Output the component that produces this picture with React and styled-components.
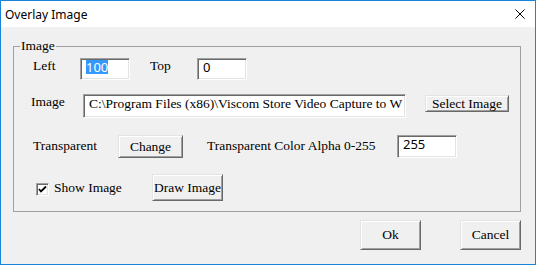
import React from 'react';
import styled, { createGlobalStyle } from 'styled-components';

const serif = `"Liberation Serif", "Times New Roman", serif`;
const sans = `"Noto Sans", "Open Sans", Arial, sans-serif`;

const GlobalStyle = createGlobalStyle`
  html, body {
    margin: 0;
    background: #fff;
  }
  * {
    box-sizing: border-box;
  }
`;

const App = () => {
  return (
    <>
      <GlobalStyle />
      <Window>
        <TitleBar>
          <Title>Overlay Image</Title>
          <svg width="10" height="10" viewBox="0 0 10 10">
            <path d="M0.5 0.5 L9.5 9.5 M9.5 0.5 L0.5 9.5" stroke="#000" strokeWidth="1" />
          </svg>
        </TitleBar>
        <Body>
          <GroupBox>
            <Legend>Image</Legend>
            <Row $h={22} $mt={0}>
              <Label $ml={19} $w={47}>Left</Label>
              <TextBox $w={50} $h={22}>
                <Selected>100</Selected>
              </TextBox>
              <Label $ml={20} $w={47}>Top</Label>
              <TextBox $w={50} $h={22}>0</TextBox>
            </Row>
            <Row $h={24} $mt={14}>
              <Label $ml={17} $w={52}>Image</Label>
              <TextBox $w={323} $h={24} $serif>
                C:\Program Files (x86)\Viscom Store Video Capture to W
              </TextBox>
              <Button $ml={19} $mt={1} $w={84} $h={17}>Select Image</Button>
            </Row>
            <Row $h={23} $mt={17}>
              <Label $ml={19} $mt={3} $w={85}>Transparent</Label>
              <Button $w={65} $h={23}>Change</Button>
              <Label $ml={24} $mt={3} $w={190}>Transparent Color Alpha 0-255</Label>
              <TextBox $w={60} $h={23}>255</TextBox>
            </Row>
            <Row $h={27} $mt={16}>
              <CheckBox $ml={22} $mt={9}>
                <svg width="9" height="9" viewBox="0 0 9 9">
                  <path d="M1 4 L3 6.5 L8 1.5" stroke="#000" strokeWidth="1.8" fill="none" />
                </svg>
              </CheckBox>
              <Label $ml={5} $mt={6} $w={98}>Show Image</Label>
              <Button $w={71} $h={27}>Draw Image</Button>
            </Row>
          </GroupBox>
          <Footer>
            <Button $w={61} $h={30}>Ok</Button>
            <Button $w={61} $h={30}>Cancel</Button>
          </Footer>
        </Body>
      </Window>
    </>
  );
};

const Window = styled.div`
  display: flex;
  flex-direction: column;
  width: 536px;
  height: 265px;
  border: 1px solid #1883d7;
  background: #f0f0f0;
`;

const TitleBar = styled.div`
  display: flex;
  align-items: center;
  justify-content: space-between;
  height: 26px;
  padding: 0 10px 0 4px;
  background: #fff;
`;

const Title = styled.span`
  font-family: ${sans};
  font-size: 12px;
  color: #000;
`;

const Body = styled.div`
  display: flex;
  flex-direction: column;
  flex: 1;
  padding: 11px 14px 0 12px;
`;

const GroupBox = styled.fieldset`
  display: flex;
  flex-direction: column;
  min-width: 0;
  margin: 0;
  padding: 4px 0 10px;
  border: 1px solid #a0a0a0;
`;

const Legend = styled.legend`
  margin-left: 6px;
  padding: 0 1px;
  font-family: ${serif};
  font-size: 13.5px;
  line-height: 16px;
  color: #000;
`;

const Row = styled.div`
  display: flex;
  align-items: flex-start;
  height: ${({ $h }) => $h}px;
  margin-top: ${({ $mt }) => $mt}px;
`;

const Label = styled.span`
  flex-shrink: 0;
  width: ${({ $w }) => $w}px;
  margin-left: ${({ $ml = 0 }) => $ml}px;
  margin-top: ${({ $mt = 0 }) => $mt}px;
  font-family: ${serif};
  font-size: 13.5px;
  line-height: 16px;
  color: #000;
  white-space: nowrap;
`;

const TextBox = styled.div`
  flex-shrink: 0;
  width: ${({ $w }) => $w}px;
  height: ${({ $h }) => $h}px;
  padding: 1px 0 0 5px;
  overflow: hidden;
  white-space: nowrap;
  background: #fff;
  border: 1px solid;
  border-color: #a0a0a0 #fff #fff #a0a0a0;
  box-shadow: inset 1px 1px 0 #696969, inset -1px -1px 0 #e3e3e3;
  font-family: ${({ $serif }) => ($serif ? serif : sans)};
  font-size: ${({ $serif }) => ($serif ? '13.5px' : '13px')};
  line-height: ${({ $serif }) => ($serif ? '16px' : '14px')};
  color: #000;
`;

const Selected = styled.span`
  display: inline-block;
  height: 14px;
  line-height: 14px;
  background: #3399ff;
  color: #fff;
`;

const Button = styled.div`
  display: flex;
  align-items: center;
  justify-content: center;
  flex-shrink: 0;
  width: ${({ $w }) => $w}px;
  height: ${({ $h }) => $h}px;
  margin-left: ${({ $ml = 0 }) => $ml}px;
  margin-top: ${({ $mt = 0 }) => $mt}px;
  background: #f0f0f0;
  border: 1px solid;
  border-color: #e3e3e3 #696969 #696969 #e3e3e3;
  box-shadow: inset 1px 1px 0 #fff, inset -1px -1px 0 #a0a0a0;
  font-family: ${serif};
  font-size: 13.5px;
  color: #000;
  white-space: nowrap;
`;

const CheckBox = styled.span`
  display: flex;
  align-items: center;
  justify-content: center;
  flex-shrink: 0;
  width: 13px;
  height: 13px;
  margin-left: ${({ $ml }) => $ml}px;
  margin-top: ${({ $mt }) => $mt}px;
  background: #fff;
  border: 1px solid;
  border-color: #a0a0a0 #fff #fff #a0a0a0;
  box-shadow: inset 1px 1px 0 #696969, inset -1px -1px 0 #e3e3e3;
`;

const Footer = styled.div`
  display: flex;
  justify-content: flex-end;
  gap: 39px;
  margin-top: 8px;
`;

export default App;
